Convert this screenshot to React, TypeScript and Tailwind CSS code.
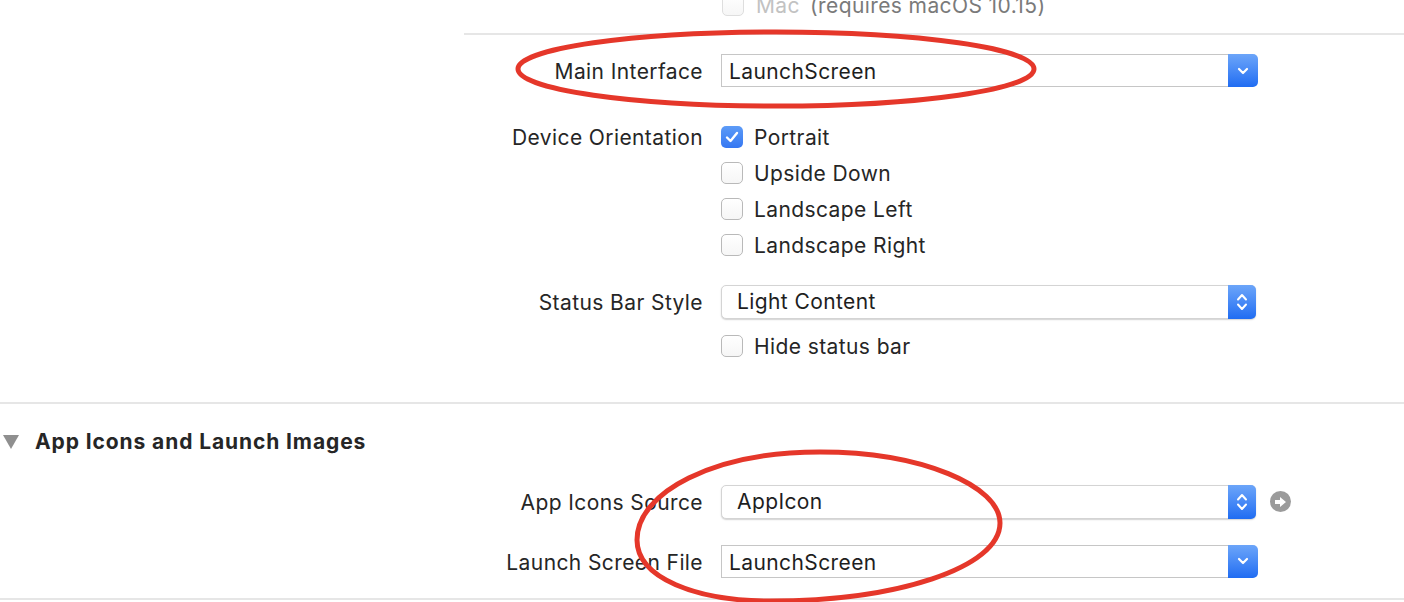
import React from "react";

function Checkbox({ checked = false, faded = false }: { checked?: boolean; faded?: boolean }) {
  if (checked) {
    return (
      <div className="w-[22px] h-[22px] rounded-[5px] bg-gradient-to-b from-[#5d9bf7] to-[#3577f2] flex items-center justify-center shrink-0">
        <svg width="14" height="12" viewBox="0 0 14 12">
          <path d="M2 6.5 L5.5 10 L12 2" fill="none" stroke="white" strokeWidth="2.4" strokeLinecap="round" strokeLinejoin="round" />
        </svg>
      </div>
    );
  }
  return (
    <div
      className={`w-[22px] h-[22px] rounded-[5px] border bg-gradient-to-b from-white to-[#f6f6f6] shrink-0 ${
        faded ? "border-[#dedede]" : "border-[#b9b9b9]"
      }`}
    />
  );
}

function DownChevron() {
  return (
    <svg width="14" height="10" viewBox="0 0 14 10">
      <path d="M3 3 L7 7 L11 3" fill="none" stroke="white" strokeWidth="2.2" strokeLinecap="round" strokeLinejoin="round" />
    </svg>
  );
}

function UpDownChevron() {
  return (
    <svg width="14" height="24" viewBox="0 0 14 24">
      <path d="M3 9.5 L7 5 L11 9.5" fill="none" stroke="white" strokeWidth="2" strokeLinecap="round" strokeLinejoin="round" />
      <path d="M3 14.5 L7 19 L11 14.5" fill="none" stroke="white" strokeWidth="2" strokeLinecap="round" strokeLinejoin="round" />
    </svg>
  );
}

function Combo({ value }: { value: string }) {
  return (
    <div className="flex h-[33px] w-[537px]">
      <div className="flex-1 flex items-center border border-r-0 border-[#c6c6c6] bg-white pl-[7px] pt-[2px] text-[21px] text-[#1e1e1e]">
        {value}
      </div>
      <div className="w-[30px] rounded-r-[5px] bg-gradient-to-b from-[#6ca5f9] to-[#1f6cf2] flex items-center justify-center">
        <DownChevron />
      </div>
    </div>
  );
}

function Popup({ value }: { value: string }) {
  return (
    <div className="flex h-[34px] w-[535px] rounded-[5px] border border-[#d4d4d4] bg-white shadow-[0_1px_1.5px_rgba(0,0,0,0.18)]">
      <div className="flex-1 flex items-center pl-[15px] pt-[1px] text-[21px] text-[#1e1e1e]">{value}</div>
      <div className="w-[28px] -my-px -mr-px rounded-r-[5px] bg-gradient-to-b from-[#6ca5f9] to-[#1f6cf2] flex items-center justify-center">
        <UpDownChevron />
      </div>
    </div>
  );
}

function Label({ children }: { children: React.ReactNode }) {
  return <div className="w-[703px] shrink-0 pt-[2px] text-right text-[21px] text-[#262626]">{children}</div>;
}

function CheckRow({ label, checked = false }: { label: string; checked?: boolean }) {
  return (
    <div className="h-[36px] flex items-center gap-[11px] text-[21px] text-[#262626]">
      <Checkbox checked={checked} />
      <span className="pt-[2px]">{label}</span>
    </div>
  );
}

export default function App() {
  return (
    <div className="relative w-[1404px] h-[602px] overflow-hidden bg-white font-['Inter','Noto_Sans',sans-serif] tracking-[0.4px]">
      {/* top partial row */}
      <div className="h-[33px] flex items-end pl-[722px]">
        <div className="mb-[12px] flex items-center gap-[12px] text-[21px]">
          <Checkbox faded />
          <span className="text-[#c2c2c2]">Mac</span>
          <span className="text-[#7a7a7a] -ml-[2px]">(requires macOS 10.15)</span>
        </div>
      </div>
      <div className="ml-[464px] h-[2px] bg-[#e6e6e6]" />

      {/* Main Interface */}
      <div className="mt-[19px] flex items-center gap-[18px]">
        <Label>Main Interface</Label>
        <Combo value="LaunchScreen" />
      </div>

      {/* Device Orientation */}
      <div className="mt-[31px] flex items-start gap-[18px]">
        <div className="w-[703px] shrink-0 h-[36px] pt-[2px] flex items-center justify-end text-[21px] text-[#262626]">
          Device Orientation
        </div>
        <div className="flex flex-col">
          <CheckRow label="Portrait" checked />
          <CheckRow label="Upside Down" />
          <CheckRow label="Landscape Left" />
          <CheckRow label="Landscape Right" />
        </div>
      </div>

      {/* Status Bar Style */}
      <div className="mt-[22px] flex items-center gap-[18px]">
        <Label>Status Bar Style</Label>
        <Popup value="Light Content" />
      </div>
      <div className="mt-[9px] flex items-center gap-[18px]">
        <div className="w-[703px] shrink-0" />
        <CheckRow label="Hide status bar" />
      </div>

      <div className="mt-[38px] h-[2px] bg-[#e6e6e6]" />

      {/* Section header */}
      <div className="mt-[23px] h-[30px] flex items-center">
        <svg width="16" height="14" viewBox="0 0 16 14" className="ml-[3px]">
          <path d="M0 0 L16 0 L8 14 Z" fill="#8f8f8f" />
        </svg>
        <span className="ml-[16px] pt-[1px] text-[21px] font-bold tracking-[0.9px] text-[#262626]">App Icons and Launch Images</span>
      </div>

      {/* App Icons Source */}
      <div className="mt-[28px] flex items-center gap-[18px]">
        <Label>App Icons Source</Label>
        <Popup value="AppIcon" />
        <div className="-ml-[4px] w-[21px] h-[21px] rounded-full bg-[#9b9b9b] flex items-center justify-center">
          <svg width="13" height="12" viewBox="0 0 13 12">
            <path d="M1 4 L6 4 L6 1 L12 6 L6 11 L6 8 L1 8 Z" fill="white" />
          </svg>
        </div>
      </div>

      {/* Launch Screen File */}
      <div className="mt-[26px] flex items-center gap-[18px]">
        <Label>Launch Screen File</Label>
        <Combo value="LaunchScreen" />
      </div>

      <div className="mt-[20px] h-[2px] bg-[#e6e6e6]" />

      {/* red annotation ellipses */}
      <svg className="absolute inset-0 pointer-events-none" width="1404" height="602" viewBox="0 0 1404 602">
        <ellipse cx="776" cy="69" rx="258" ry="37" fill="none" stroke="#e5372a" strokeWidth="5" />
        <path
          d="M637 540 C637 492 714 452 820 452 C922 452 1000 486 1000 523 C1000 568 896 601 770 601 C696 601 637 578 637 540 Z"
          fill="none"
          stroke="#e5372a"
          strokeWidth="5"
        />
      </svg>
    </div>
  );
}
